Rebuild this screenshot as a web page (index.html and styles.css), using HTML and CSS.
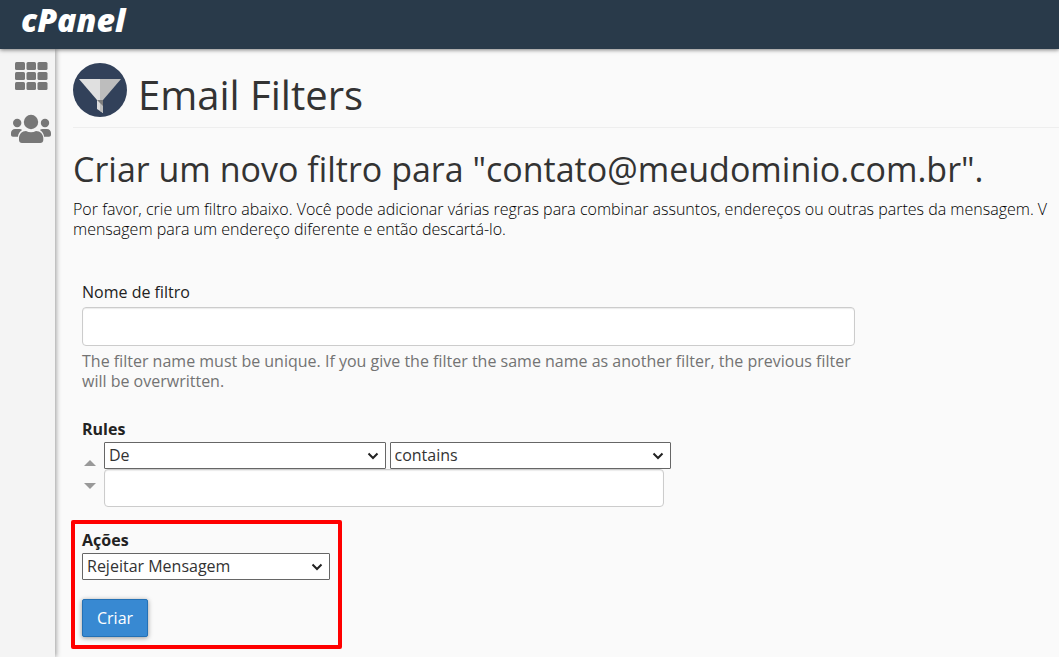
FILE: index.html
```html
<!DOCTYPE html>
<html lang="pt-BR">
<head>
    <meta charset="UTF-8">
    <meta name="viewport" content="width=device-width, initial-scale=1.0">
    <title>cPanel - Email Filters</title>
    <link rel="stylesheet" href="styles.css">
</head>
<body>
    <header class="topo">
        <a class="logo" href="#">cPanel</a>
    </header>
    <div class="pagina">
        <nav class="lateral">
            <a href="#" aria-label="Home">
                <svg width="40" height="30" viewBox="0 0 40 30" fill="#777">
                    <rect x="4" y="1" width="10" height="8" rx="1.5"/>
                    <rect x="15.500" y="1" width="9.500" height="8" rx="1.5"/>
                    <rect x="26.500" y="1" width="10" height="8" rx="1.5"/>
                    <rect x="4" y="11" width="10" height="8" rx="1.5"/>
                    <rect x="15.500" y="11" width="9.500" height="8" rx="1.5"/>
                    <rect x="26.500" y="11" width="10" height="8" rx="1.5"/>
                    <rect x="4" y="21" width="10" height="8" rx="1.5"/>
                    <rect x="15.500" y="21" width="9.500" height="8" rx="1.5"/>
                    <rect x="26.500" y="21" width="10" height="8" rx="1.5"/>
                </svg>
            </a>
            <a href="#" aria-label="User Manager">
                <svg width="40" height="30" viewBox="0 0 40 30" fill="#777">
                    <circle cx="6.200" cy="9" r="4.200"/>
                    <circle cx="34" cy="9" r="4.200"/>
                    <circle cx="20" cy="8" r="7.200"/>
                    <path d="M4 15h4.500c1 0 2 .4 2.600 1-2.300 1.300-3.800 3.500-4.200 6.800H2c-1.200 0-2-.8-2-2V19c0-2.300 1.700-4 4-4z"/>
                    <path d="M36 15h-4.500c-1 0-2 .4-2.600 1 2.300 1.300 3.800 3.500 4.200 6.800H38c1.200 0 2-.8 2-2V19c0-2.300-1.700-4-4-4z"/>
                    <path d="M15 17c3 1.600 7 1.600 10 0 4.200 0 7.300 3.200 7.300 7.300V26c0 1.700-1.300 3-3 3H11c-1.700 0-3-1.300-3-3v-1.700C8 20.200 11 17 15 17z"/>
                </svg>
            </a>
        </nav>
        <main class="conteudo">
            <h1 class="titulo">
                <svg width="54" height="54" viewBox="0 0 54 54">
                    <circle cx="27" cy="27" r="27" fill="#32415a"/>
                    <path d="M6 16h21v21h-3z" fill="#e0e0e0"/>
                    <path d="M27 16h21L30 37h-3z" fill="#bdbdbd"/>
                    <path d="M24 37h6v13l-6-4z" fill="#dcdcdc"/>
                    <path d="M27 37h3v13l-3-2z" fill="#bdbdbd"/>
                    <path d="M24 37h6v6z" fill="#7d7d7d"/>
                </svg>
                Email Filters
            </h1>
            <h2 class="subtitulo">Criar um novo filtro para "contato@meudominio.com.br".</h2>
            <p class="descricao">Por favor, crie um filtro abaixo. Você pode adicionar várias regras para combinar assuntos, endereços ou outras partes da mensagem. V<br>mensagem para um endereço diferente e então descartá-lo.</p>

            <form>
                <div class="campo">
                    <label class="rotulo" for="nome">Nome de filtro</label>
                    <input class="texto" type="text" id="nome">
                    <div class="ajuda">The filter name must be unique. If you give the filter the same name as another filter, the previous filter will be overwritten.</div>
                </div>

                <div class="regras">
                    <label class="rotulo negrito" for="parte">Rules</label>
                    <div class="regra">
                        <div class="setas">
                            <button type="button" aria-label="Mover para cima">
                                <svg width="12" height="6" viewBox="0 0 12 6"><path d="M6 0l6 6H0z" fill="#999"/></svg>
                            </button>
                            <button type="button" aria-label="Mover para baixo">
                                <svg width="12" height="6" viewBox="0 0 12 6"><path d="M0 0h12L6 6z" fill="#999"/></svg>
                            </button>
                        </div>
                        <div class="criterios">
                            <div class="selecoes">
                                <select id="parte"><option>De</option></select>
                                <select aria-label="Operador"><option>contains</option></select>
                            </div>
                            <input class="texto valor" type="text" aria-label="Valor">
                        </div>
                    </div>
                </div>

                <div class="acoes">
                    <label class="rotulo negrito" for="acao">Ações</label>
                    <select id="acao"><option>Rejeitar Mensagem</option></select>
                    <button class="criar" type="submit">Criar</button>
                </div>
            </form>
        </main>
    </div>
</body>
</html>
```
FILE: styles.css
```css
* {
    box-sizing: border-box;
}
body {
    font-family: "Open Sans", sans-serif;
    font-size: 16px;
    line-height: 20px;
    color: #333;
    background-color: #fafafa;
    margin: 0;
    min-height: 100vh;
    display: flex;
    flex-direction: column;
    overflow: hidden;
}
.topo {
    position: relative;
    z-index: 1;
    height: 49px;
    padding: 3px 21px;
    background-color: #293a4a;
    box-shadow: 0 1px 4px rgba(0, 0, 0, 0.5);
}
.logo {
    font-size: 32px;
    font-weight: 800;
    font-style: italic;
    line-height: 34px;
    color: #fff;
    text-decoration: none;
}
.pagina {
    flex: 1;
    display: flex;
}
.lateral {
    flex: none;
    width: 55px;
    padding: 12px 4px 0 11px;
    display: flex;
    flex-direction: column;
    gap: 23px;
    background-color: #f4f4f4;
    box-shadow: 1px 0 5px rgba(0, 0, 0, 0.4);
}
.lateral svg {
    display: block;
}
.conteudo {
    flex: 1;
    min-width: 0;
    padding: 14px 0 8px 18px;
}
h1, h2, p {
    margin: 0;
    font-weight: 400;
}
.titulo {
    display: flex;
    gap: 11px;
    height: 65px;
    font-size: 40px;
    line-height: 64px;
    border-bottom: 1px solid #eee;
}
.titulo svg {
    flex: none;
}
.subtitulo {
    margin-top: 21px;
    font-size: 34px;
    line-height: 40px;
    white-space: nowrap;
}
.descricao {
    margin-top: 10px;
    font-weight: 300;
    color: #000;
    white-space: nowrap;
}
.campo {
    max-width: 782px;
    padding-left: 9px;
    margin-top: 43px;
}
.rotulo {
    display: block;
    font-weight: 500;
    color: #222;
}
.negrito {
    font-weight: 700;
}
.texto {
    display: block;
    width: 100%;
    height: 39px;
    padding: 6px 12px;
    font: inherit;
    background-color: #fff;
    border: 1px solid #ccc;
    border-radius: 4px;
    box-shadow: inset 0 1px 1px rgba(0, 0, 0, 0.08);
}
.campo .texto {
    margin: 5px 0;
}
.ajuda {
    color: #737373;
}
.regras {
    max-width: 598px;
    padding-left: 9px;
    margin-top: 28px;
}
.regra {
    display: flex;
    gap: 6px;
    margin-top: 3px;
}
.setas {
    flex: none;
    display: flex;
    flex-direction: column;
    gap: 17px;
    padding: 18px 2px;
}
.setas button {
    display: block;
    padding: 0;
    border: 0;
    background: none;
    line-height: 0;
}
.criterios {
    flex: 1;
}
.selecoes {
    display: flex;
    gap: 4px;
}
.selecoes select {
    flex: 1;
}
select {
    appearance: none;
    height: 27px;
    padding: 0 24px 2px 4px;
    font: inherit;
    color: #333;
    background: #fff url("data:image/svg+xml,%3Csvg xmlns='http://www.w3.org/2000/svg' width='12' height='8'%3E%3Cpath d='M1.500 1.500L6 6l4.500-4.500' fill='none' stroke='%23222' stroke-width='2'/%3E%3C/svg%3E") no-repeat right 6px center;
    border: 1px solid #666;
    border-radius: 1px;
}
.valor {
    height: 38px;
    max-width: 560px;
}
.acoes {
    width: 271px;
    margin: 13px 0 0 -2px;
    padding: 6px 8px 8px 7px;
    border: 4px solid #f00;
    border-radius: 2px;
}
.acoes select {
    display: block;
    width: 100%;
    margin-top: 3px;
}
.criar {
    display: block;
    margin-top: 19px;
    padding: 8px 14px;
    font: inherit;
    line-height: 20px;
    color: #fff;
    background-color: #3889d2;
    border: 1px solid #2471b5;
    border-radius: 2px;
    box-shadow: 0 1px 5px rgba(0, 0, 0, 0.4);
}
```
